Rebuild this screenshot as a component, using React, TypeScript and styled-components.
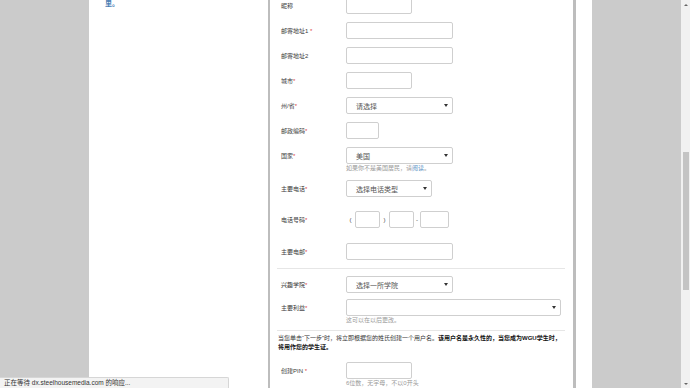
import React from 'react';
import styled, { createGlobalStyle } from 'styled-components';

const GlobalStyle = createGlobalStyle`
  html, body {
    margin: 0;
    padding: 0;
    background: #cbcbcb;
    font-family: "Liberation Sans", "Noto Sans CJK SC", sans-serif;
  }
  #root {
    height: 388px;
    overflow: hidden;
  }
`;

type Field = {
  label: string;
  star?: string;
  kind: 'input' | 'select';
  width: number;
  value?: string;
  help?: string;
  helpLink?: string;
  helpEnd?: string;
  mt?: number;
  mb?: number;
};

const topFields: Field[] = [
  { label: '昵称', kind: 'input', width: 66 },
  { label: '邮寄地址1', star: ' *', kind: 'input', width: 107 },
  { label: '邮寄地址2', kind: 'input', width: 107 },
  { label: '城市', star: '*', kind: 'input', width: 66 },
  { label: '州/省', star: '*', kind: 'select', width: 107, value: '请选择' },
  { label: '邮政编码', star: '*', kind: 'input', width: 33 },
  {
    label: '国家',
    star: '*',
    kind: 'select',
    width: 107,
    value: '美国',
    help: '如果你不是美国居民，请',
    helpLink: '阅读',
    helpEnd: '。',
  },
  { label: '主要电话', star: '*', kind: 'select', width: 86, value: '选择电话类型' },
];

const App: React.FC = () => {
  const renderControl = (f: Field) =>
    f.kind === 'select' ? (
      <Select $w={f.width}>
        <span>{f.value}</span>
        <Caret />
      </Select>
    ) : (
      <Input $w={f.width} />
    );

  const renderRow = (f: Field) => (
    <Row key={f.label} $mt={f.mt} $mb={f.mb}>
      <Label>
        {f.label}
        {f.star && <Star>{f.star}</Star>}
      </Label>
      {renderControl(f)}
      {f.help && (
        <Help>
          {f.help}
          {f.helpLink && <HelpLink>{f.helpLink}</HelpLink>}
          {f.helpEnd}
        </Help>
      )}
    </Row>
  );

  return (
    <>
      <GlobalStyle />
      <Screen>
        <Gutter />
        <Page>
          <SideColumn>
            <SideText>里。</SideText>
          </SideColumn>
          <Panel>
            <FormBody>
              {topFields.map(renderRow)}

              <Row $mt={14} $mb={15}>
                <Label>
                  电话号码<Star>*</Star>
                </Label>
                <PhoneGroup>
                  <Sep $w={9}>(</Sep>
                  <Input $w={25} />
                  <Sep $w={9}>)</Sep>
                  <Input $w={25} />
                  <Sep $w={6}>-</Sep>
                  <Input $w={29} />
                </PhoneGroup>
              </Row>

              {renderRow({ label: '主要电邮', star: '*', kind: 'input', width: 107 })}

              <Divider $mb={7} />

              {renderRow({ label: '兴趣学院', star: '*', kind: 'select', width: 107, value: '选择一所学院', mb: 6 })}
              {renderRow({
                label: '主要利益',
                star: '*',
                kind: 'select',
                width: 215,
                value: '',
                help: '这可以在以后更改。',
                mb: 6,
              })}

              <Divider $mb={3} />

              <Notice>
                当您单击“下一步”时，将立即根据您的姓氏创建一个用户名。
                <b>该用户名是永久性的，当您成为WGU学生时，将用作您的学生证。</b>
              </Notice>

              <Row $mt={10}>
                <Label>
                  创建PIN<Star> *</Star>
                </Label>
                <Input $w={66} />
                <Help>6位数，无字母，不以0开头</Help>
              </Row>
            </FormBody>
          </Panel>
          <PageEdge />
        </Page>
        <Gutter />
        <ScrollBar>
          <ScrollArrow $up />
          <ScrollTrack>
            <ScrollThumb />
          </ScrollTrack>
          <ScrollArrow />
        </ScrollBar>
      </Screen>
      <StatusBar>正在等待 dx.steelhousemedia.com 的响应...</StatusBar>
    </>
  );
};

const Screen = styled.div`
  display: flex;
  height: 388px;
  width: 690px;
`;

const Gutter = styled.div`
  width: 89px;
  flex-shrink: 0;
  background: #cbcbcb;
`;

const Page = styled.div`
  display: flex;
  width: 503px;
  background: #fff;
`;

const SideColumn = styled.div`
  width: 179px;
  padding-left: 16px;
  box-sizing: border-box;
`;

const SideText = styled.div`
  margin-top: -1px;
  font-size: 7px;
  line-height: 9px;
  font-weight: bold;
  color: #4a7db3;
`;

const Panel = styled.div`
  width: 308px;
  box-sizing: border-box;
  border-left: 2px solid #bdbdbd;
  border-right: 3px solid #bdbdbd;
  padding: 0 7px;
  overflow: hidden;
`;

const PageEdge = styled.div`
  flex: 1;
`;

const FormBody = styled.div`
  margin-top: -3px;
`;

const Row = styled.div<{ $mt?: number; $mb?: number }>`
  display: grid;
  grid-template-columns: 65px auto;
  justify-content: start;
  align-items: center;
  padding-left: 4px;
  margin-top: ${p => p.$mt ?? 0}px;
  margin-bottom: ${p => p.$mb ?? 8}px;
`;

const Label = styled.div`
  font-size: 6px;
  line-height: 8px;
  color: #3a3a3a;
  white-space: nowrap;
`;

const Star = styled.span`
  color: #d44;
`;

const Input = styled.div<{ $w: number }>`
  width: ${p => p.$w}px;
  height: 17px;
  box-sizing: border-box;
  border: 1px solid #cfcfcf;
  border-radius: 2px;
  background: #fff;
`;

const Select = styled.div<{ $w: number }>`
  width: ${p => p.$w}px;
  height: 17px;
  box-sizing: border-box;
  border: 1px solid #cfcfcf;
  border-radius: 2px;
  background: #fff;
  display: flex;
  align-items: center;
  justify-content: space-between;
  padding: 0 4px 0 9px;
  font-size: 7px;
  color: #555;
`;

const Caret = styled.span`
  width: 0;
  height: 0;
  border-left: 2px solid transparent;
  border-right: 2px solid transparent;
  border-top: 3px solid #333;
`;

const Help = styled.div`
  grid-column: 2;
  font-size: 6px;
  line-height: 8px;
  color: #999;
`;

const HelpLink = styled.span`
  color: #5a8fc4;
`;

const PhoneGroup = styled.div`
  display: flex;
  align-items: center;
`;

const Sep = styled.span<{ $w: number }>`
  width: ${p => p.$w}px;
  text-align: center;
  font-size: 6px;
  color: #444;
`;

const Divider = styled.div<{ $mb: number }>`
  height: 1px;
  background: #e6e6e6;
  margin: 0 1px ${p => p.$mb}px 0;
`;

const Notice = styled.p`
  margin: 0 0 0 1px;
  font-size: 6px;
  line-height: 9px;
  color: #333;

  b {
    color: #111;
  }
`;

const ScrollBar = styled.div`
  width: 9px;
  display: flex;
  flex-direction: column;
  background: #f1f1f1;
`;

const ScrollArrow = styled.div<{ $up?: boolean }>`
  height: 9px;
  display: flex;
  align-items: center;
  justify-content: center;

  &::after {
    content: '';
    border-left: 2px solid transparent;
    border-right: 2px solid transparent;
    ${p => (p.$up ? 'border-bottom: 2px solid #666;' : 'border-top: 2px solid #666;')}
  }
`;

const ScrollTrack = styled.div`
  flex: 1;
  padding-top: 143px;
`;

const ScrollThumb = styled.div`
  height: 138px;
  margin: 0 1px 0 2px;
  background: #c4c4c4;
`;

const StatusBar = styled.div`
  position: fixed;
  left: 0;
  bottom: 0;
  width: 229px;
  height: 11px;
  box-sizing: border-box;
  padding-left: 4px;
  background: #f3f3f3;
  border-top: 1px solid #d6d6d6;
  border-right: 1px solid #d6d6d6;
  border-top-right-radius: 2px;
  font-size: 6.5px;
  line-height: 10px;
  color: #333;
`;

export default App;
